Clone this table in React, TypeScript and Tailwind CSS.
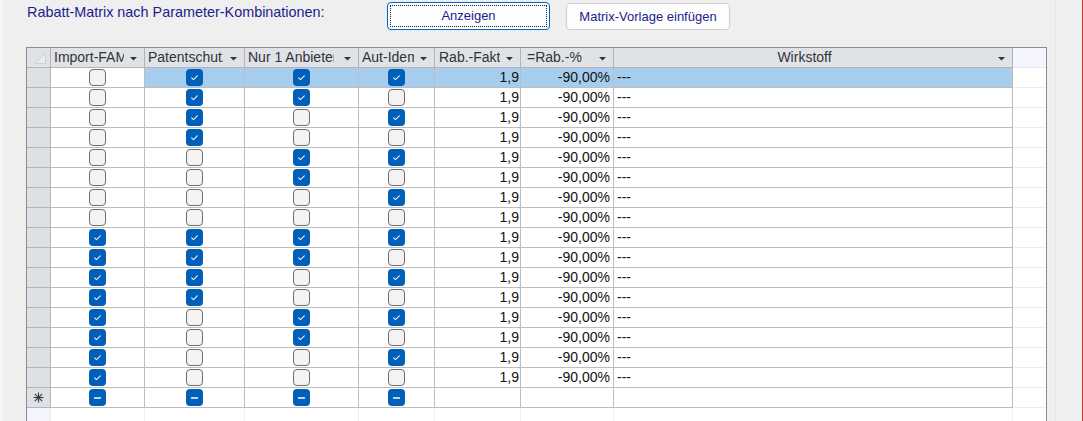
import React from "react";

type S = "on" | "off" | "ind";

function Box({ s }: { s: S }) {
  if (s === "off")
    return <div className="w-[17px] h-[17px] rounded-[4px] border border-[#6e6e6e] bg-[#f3f3f3]" />;
  if (s === "on")
    return (
      <div className="w-[17px] h-[17px] rounded-[4px] bg-[#005fb8] flex items-center justify-center">
        <svg width="17" height="17" viewBox="0 0 17 17">
          <path d="M5.6 8.9 L7.5 10.6 L11.3 6.9" fill="none" stroke="#f2f6fb" strokeWidth="1.05" strokeLinecap="round" strokeLinejoin="round" />
        </svg>
      </div>
    );
  return (
    <div className="w-[17px] h-[17px] rounded-[4px] bg-[#005fb8] flex items-center justify-center">
      <div className="w-[7px] h-[2px] bg-[#b9d2ee]" />
    </div>
  );
}

function Arrow() {
  return (
    <svg width="7" height="4" viewBox="0 0 7 4" className="shrink-0 ml-[6px] mr-[7px] mt-[3px]">
      <polygon points="0,0 7,0 3.5,3.5" fill="#333" />
    </svg>
  );
}

const W = ["w-[24px]", "w-[94px]", "w-[100px]", "w-[114px]", "w-[76px]", "w-[86px]", "w-[93px]", "w-[399px]", "w-[33px]"];

const rows: boolean[][] = [];
for (let i = 0; i < 16; i++) {
  rows.push([i >= 8, (i % 8) < 4, (i % 4) < 2, i % 2 === 0]);
}

const font = { fontFamily: '"Liberation Sans", Arial, sans-serif' };

function HeaderCell({ w, text, pl, center, extra }: { w: string; text: string; pl: string; center?: boolean; extra?: string }) {
  return (
    <div className={`${w} h-[20px] shrink-0 bg-[#dfe3e8] border-r border-b border-[#b4b4b4] flex items-center ${pl}`}>
      <span className={`flex-1 min-w-0 overflow-hidden whitespace-nowrap text-[14px] leading-[19px] text-[#333] ${center ? "text-center" : ""} ${extra ?? ""}`}>
        {text}
      </span>
      <Arrow />
    </div>
  );
}

export default function App() {
  return (
    <div className="w-[1083px] h-[421px] overflow-hidden bg-[#efefef] flex" style={font}>
      <div className="w-[3px] shrink-0 bg-[#f6f6f6]" />
      <div className="w-[1044px] shrink-0 flex flex-col">
        <div className="h-[47px] shrink-0 flex items-start">
          <div className="w-[384px] shrink-0 pl-[24px] pt-[4px] text-[14.4px] leading-[17px] text-[#1c1c8c] whitespace-nowrap">
            Rabatt-Matrix nach Parameter-Kombinationen:
          </div>
          <button className="relative w-[163px] h-[28px] mt-[2px] rounded-[4px] border border-[#0067c0] bg-[#fdfdfd] text-[13px] text-[#1c1c8c] flex items-center justify-center shrink-0">
            <span className="absolute inset-[2px] border border-dotted border-[#222]" />
            <span className="relative">Anzeigen</span>
          </button>
          <button className="w-[164px] h-[27px] mt-[3px] ml-[16px] rounded-[4px] border border-[#cfcfcf] bg-[#fdfdfd] text-[13px] text-[#1c1c8c] flex items-center justify-center shrink-0 pt-[1px]">
            Matrix-Vorlage einfügen
          </button>
        </div>
        <div className="ml-[23px] w-[1021px] border-l border-t border-r border-[#8c8c8c] bg-white flex flex-col">
          {/* header */}
          <div className="flex">
            <div className={`${W[0]} h-[20px] shrink-0 bg-[#dfe3e8] border-r border-b border-[#b4b4b4] flex items-end justify-end pr-[4px] pb-[3px]`}>
              <svg width="11" height="11" viewBox="0 0 11 11">
                <polygon points="10.5,0.5 10.5,10.5 0.5,10.5" fill="#e9ebee" stroke="#cfd1d4" strokeWidth="1" />
              </svg>
            </div>
            <HeaderCell w={W[1]} text="Import-FAM" pl="pl-[3px]" />
            <HeaderCell w={W[2]} text="Patentschutz" pl="pl-[3px]" extra="mr-[1px]" />
            <HeaderCell w={W[3]} text="Nur 1 Anbieter" pl="pl-[3px]" extra="mr-[4px]" />
            <HeaderCell w={W[4]} text="Aut-Idem" pl="pl-[3px]" />
            <HeaderCell w={W[5]} text="Rab.-Faktor" pl="pl-[4px]" />
            <HeaderCell w={W[6]} text="=Rab.-%" pl="pl-[6px]" />
            <HeaderCell w={W[7]} text="Wirkstoff" pl="pl-[3px]" center />
            <div className={`${W[8]} h-[20px] shrink-0 bg-[#f4f5fc] border-b border-[#e8e8ee]`} />
          </div>
          {/* data rows */}
          {rows.map((r, i) => {
            const sel = i === 0;
            const bg = sel ? "bg-[#a6cdee]" : "bg-white";
            return (
              <div key={i} className="flex text-[14px] leading-[19px] text-[#111]">
                <div className={`${W[0]} h-[20px] shrink-0 bg-[#dde1e6] border-r border-b border-[#b4b4b4]`} />
                {r.map((v, j) => (
                  <div
                    key={j}
                    className={`${W[j + 1]} h-[20px] shrink-0 border-r border-b border-[#bdbdbd] flex items-center justify-center ${j === 0 ? "bg-white" : bg}`}
                  >
                    <Box s={v ? "on" : "off"} />
                  </div>
                ))}
                <div className={`${W[5]} h-[20px] shrink-0 border-r border-b border-[#bdbdbd] text-right pr-[1px] ${bg}`}>1,9</div>
                <div className={`${W[6]} h-[20px] shrink-0 border-r border-b border-[#bdbdbd] text-right pr-[3px] ${bg}`}>-90,00%</div>
                <div className={`${W[7]} h-[20px] shrink-0 border-r border-b border-[#bdbdbd] pl-[3px] ${bg}`}>---</div>
                <div className={`${W[8]} h-[20px] shrink-0 bg-white border-b border-[#ededed]`} />
              </div>
            );
          })}
          {/* new row */}
          <div className="flex">
            <div className={`${W[0]} h-[20px] shrink-0 bg-[#dde1e6] border-r border-b border-[#b4b4b4] flex items-center justify-center`}>
              <svg width="11" height="11" viewBox="0 0 11 11">
                <g stroke="#3a3a3a" strokeWidth="1.1">
                  <line x1="5.5" y1="0.5" x2="5.5" y2="10.5" />
                  <line x1="0.5" y1="5.5" x2="10.5" y2="5.5" />
                  <line x1="1.8" y1="1.8" x2="9.2" y2="9.2" />
                  <line x1="9.2" y1="1.8" x2="1.8" y2="9.2" />
                </g>
              </svg>
            </div>
            {[1, 2, 3, 4].map((j) => (
              <div key={j} className={`${W[j]} h-[20px] shrink-0 bg-white border-r border-b border-[#bdbdbd] flex items-center justify-center`}>
                <Box s="ind" />
              </div>
            ))}
            {[5, 6, 7].map((j) => (
              <div key={j} className={`${W[j]} h-[20px] shrink-0 bg-white border-r border-b border-[#bdbdbd]`} />
            ))}
            <div className={`${W[8]} h-[20px] shrink-0 bg-white border-b border-[#ededed]`} />
          </div>
          {/* empty area */}
          <div className="flex">
            <div className={`${W[0]} h-[20px] shrink-0 bg-[#f4f5fc] border-r border-[#ececf2]`} />
            {[1, 2, 3, 4, 5, 6, 7].map((j) => (
              <div key={j} className={`${W[j]} h-[20px] shrink-0 bg-white border-r border-[#f0f0f0]`} />
            ))}
            <div className={`${W[8]} h-[20px] shrink-0 bg-white`} />
          </div>
        </div>
      </div>
      <div className="w-[8px] shrink-0 bg-[#efefef]" />
      <div className="w-[1px] shrink-0 bg-[#e4e4e4]" />
      <div className="w-[26px] shrink-0 bg-[#efefef]" />
      <div className="w-[1px] shrink-0 bg-[#c0392b]" />
    </div>
  );
}
